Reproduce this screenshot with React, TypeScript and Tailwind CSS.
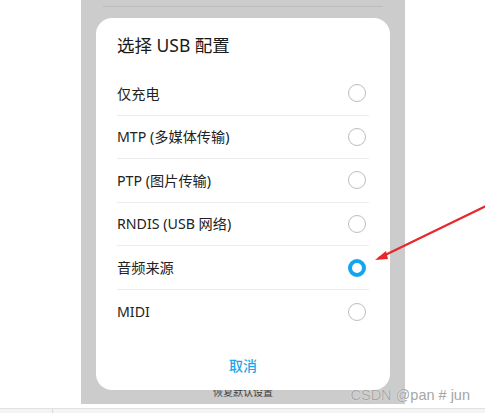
import React from 'react';

const options = [
  { label: '仅充电', checked: false },
  { label: 'MTP (多媒体传输)', checked: false },
  { label: 'PTP (图片传输)', checked: false },
  { label: 'RNDIS (USB 网络)', checked: false },
  { label: '音频来源', checked: true },
  { label: 'MIDI', checked: false },
];

function Radio({ checked }: { checked: boolean }) {
  if (checked) {
    return <div className="w-[18px] h-[18px] rounded-full border-[4.5px] border-[#12a6f0] bg-white" />;
  }
  return <div className="w-[18px] h-[18px] rounded-full border border-[#bdbdbd] bg-white" />;
}

export default function App() {
  return (
    <div
      className="relative w-[485px] h-[413px] bg-white overflow-hidden"
      style={{ fontFamily: '"Noto Sans", "Noto Sans CJK SC", sans-serif' }}
    >
      <div className="flex flex-col">
        {/* phone screen */}
        <div className="ml-[81px] w-[324px] h-[404px] bg-[#cccccc] pt-[6px] flex flex-col">
          <div className="mx-[22px] h-px bg-[#bcbcbc]" />
          <div className="relative z-10 mt-[11px] ml-[15px] w-[294px] h-[372px] bg-white rounded-[16px] flex flex-col">
            <div className="px-[21px] pt-[15px] h-[54px] text-[17.5px] leading-[24px] text-[#1a1a1a]">
              选择 USB 配置
            </div>
            <div className="mx-[21px] flex flex-col">
              {options.map((o, i) => (
                <div
                  key={o.label}
                  className={`h-[43.6px] flex items-center justify-between ${
                    i < options.length - 1 ? 'border-b border-[#ececec]' : ''
                  }`}
                >
                  <span className="text-[14.2px] text-[#222222]">{o.label}</span>
                  <div className="mr-[3px]">
                    <Radio checked={o.checked} />
                  </div>
                </div>
              ))}
            </div>
            <div className="mt-[12px] h-[40px] flex items-center justify-center text-[14px] font-medium text-[#1fa6e6]">
              取消
            </div>
          </div>
          <div className="-mt-[4px] text-center text-[10px] leading-[12px] text-[#3a3a3a]">恢复默认设置</div>
        </div>
        <div className="h-[4px]" />
        <div className="h-[5px] bg-[#f4f4f4] border-t border-[#e2e2e2] flex">
          <div className="w-[53px] border-r border-[#dcdcdc]" />
        </div>
      </div>

      {/* watermark */}
      <div
        className="absolute z-20 right-[15px] top-[386px] text-[14.5px] leading-[18px] text-[#a6a6a6]"
        style={{ fontFamily: '"Liberation Sans", Arial, sans-serif', textShadow: '0 0 1px #fff' }}
      >
        CSDN @pan # jun
      </div>

      {/* annotation arrow */}
      <svg className="absolute inset-0 z-20 pointer-events-none" width="485" height="413" viewBox="0 0 485 413">
        <line x1="486" y1="206" x2="379" y2="258" stroke="#e8262b" strokeWidth="2.2" strokeLinecap="round" />
        <path d="M375 260 L386 251 L388 259 Z" fill="#e8262b" />
      </svg>
    </div>
  );
}
